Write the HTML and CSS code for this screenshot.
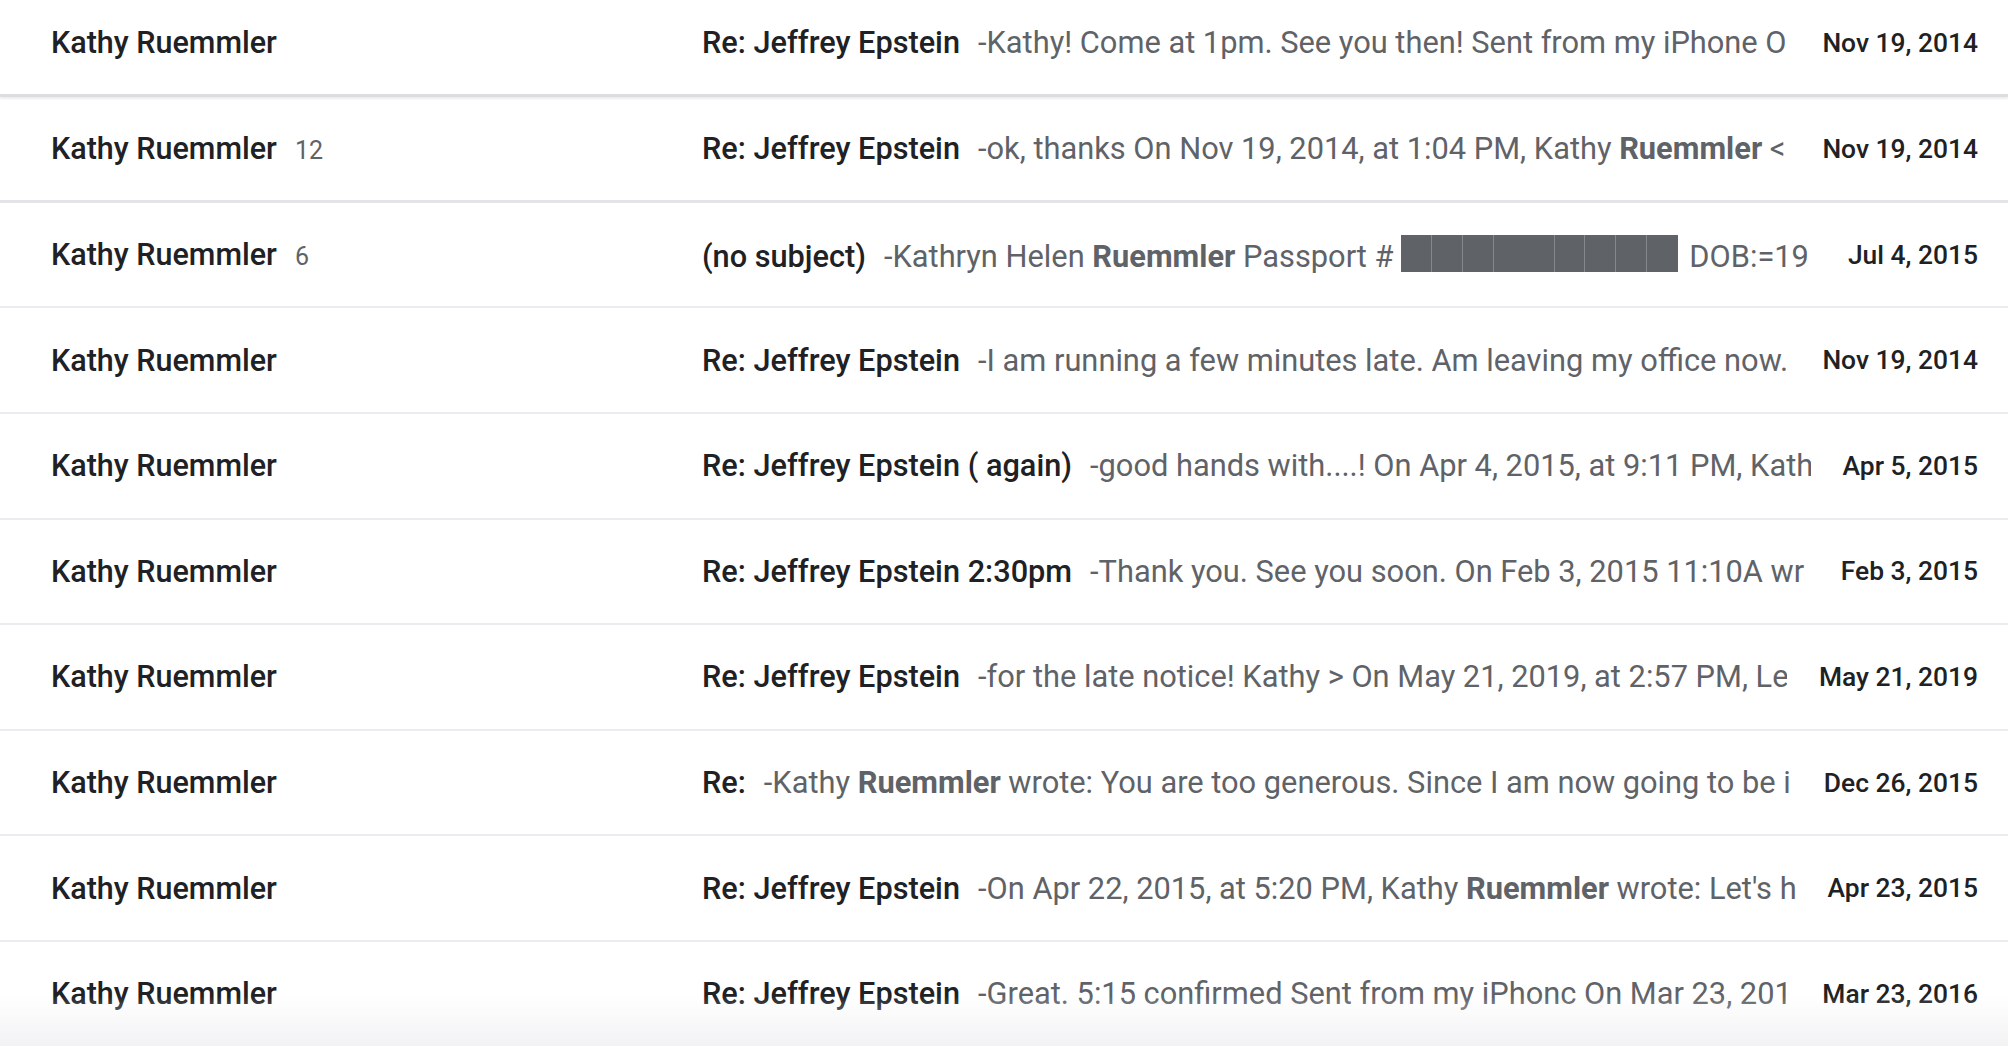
FILE: index.html
```html
<!DOCTYPE html>
<html lang="en">
<head>
<meta charset="utf-8">
<title>Inbox</title>
<link rel="stylesheet" href="styles.css">
</head>
<body>
<div class="viewport">
  <div class="list">
    <div class="row row-hover">
      <div class="from"><span class="name">Kathy Ruemmler</span></div>
      <div class="content"><span class="subject">Re: Jeffrey Epstein</span><span class="snippet">-Kathy! Come at 1pm. See you then! Sent from my iPhone O</span></div>
      <div class="date">Nov 19, 2014</div>
    </div>
    <div class="row row-hover2">
      <div class="from"><span class="name">Kathy Ruemmler</span><span class="count">12</span></div>
      <div class="content"><span class="subject">Re: Jeffrey Epstein</span><span class="snippet">-ok, thanks On Nov 19, 2014, at 1:04 PM, Kathy <b>Ruemmler</b> &lt;</span></div>
      <div class="date">Nov 19, 2014</div>
    </div>
    <div class="row">
      <div class="from"><span class="name">Kathy Ruemmler</span><span class="count">6</span></div>
      <div class="content"><span class="subject">(no subject)</span><span class="snippet">-Kathryn Helen <b>Ruemmler</b> Passport # <span class="redact"><i class="c1"></i><i class="c1"></i><i class="c1"></i><i class="c2"></i><i class="c1"></i><i class="c1"></i><i class="c1"></i><i class="c1 last"></i></span> DOB:=19</span></div>
      <div class="date">Jul 4, 2015</div>
    </div>
    <div class="row">
      <div class="from"><span class="name">Kathy Ruemmler</span></div>
      <div class="content"><span class="subject">Re: Jeffrey Epstein</span><span class="snippet">-I am running a few minutes late. Am leaving my office now.</span></div>
      <div class="date">Nov 19, 2014</div>
    </div>
    <div class="row">
      <div class="from"><span class="name">Kathy Ruemmler</span></div>
      <div class="content"><span class="subject">Re: Jeffrey Epstein ( again)</span><span class="snippet">-good hands with....! On Apr 4, 2015, at 9:11 PM, Kath</span></div>
      <div class="date">Apr 5, 2015</div>
    </div>
    <div class="row">
      <div class="from"><span class="name">Kathy Ruemmler</span></div>
      <div class="content"><span class="subject">Re: Jeffrey Epstein 2:30pm</span><span class="snippet">-Thank you. See you soon. On Feb 3, 2015 11:10A wr</span></div>
      <div class="date">Feb 3, 2015</div>
    </div>
    <div class="row">
      <div class="from"><span class="name">Kathy Ruemmler</span></div>
      <div class="content"><span class="subject">Re: Jeffrey Epstein</span><span class="snippet">-for the late notice! Kathy &gt; On May 21, 2019, at 2:57 PM, Le</span></div>
      <div class="date">May 21, 2019</div>
    </div>
    <div class="row">
      <div class="from"><span class="name">Kathy Ruemmler</span></div>
      <div class="content"><span class="subject">Re:</span><span class="snippet">-Kathy <b>Ruemmler</b> wrote: You are too generous. Since I am now going to be i</span></div>
      <div class="date">Dec 26, 2015</div>
    </div>
    <div class="row">
      <div class="from"><span class="name">Kathy Ruemmler</span></div>
      <div class="content"><span class="subject">Re: Jeffrey Epstein</span><span class="snippet">-On Apr 22, 2015, at 5:20 PM, Kathy <b>Ruemmler</b> wrote: Let's h</span></div>
      <div class="date">Apr 23, 2015</div>
    </div>
    <div class="row">
      <div class="from"><span class="name">Kathy Ruemmler</span></div>
      <div class="content"><span class="subject">Re: Jeffrey Epstein</span><span class="snippet">-Great. 5:15 confirmed Sent from my iPhonc On Mar 23, 201</span></div>
      <div class="date">Mar 23, 2016</div>
    </div>
  </div>
  <div class="fade"></div>
</div>
</body>
</html>
```

FILE: styles.css
```css
html, body {
  margin: 0;
  padding: 0;
  background: #ffffff;
}

body {
  font-family: Roboto, "Liberation Sans", Arial, sans-serif;
  color: #202124;
  overflow: hidden;
}

.viewport {
  position: relative;
  width: 2008px;
  height: 1046px;
  overflow: hidden;
}

.list {
  margin-top: -8.4px;
  display: flex;
  flex-direction: column;
}

.row {
  box-sizing: border-box;
  height: 105.6px;
  display: flex;
  align-items: center;
  padding: 0 30px 0 51px;
  border-bottom: 2px solid #ececf0;
  white-space: nowrap;
}

.row-hover {
  border-bottom: 3px solid #dcdde0;
  box-shadow: 0 2px 2px rgba(60, 64, 67, 0.10);
  position: relative;
  z-index: 2;
}

.row-hover2 {
  border-bottom: 3px solid #e3e4e7;
  position: relative;
  z-index: 1;
}

.from {
  width: 651px;
  flex: none;
  display: flex;
  align-items: baseline;
}

.name {
  font-size: 30.5px;
  font-weight: 500;
  color: #202124;
}

.count {
  font-size: 25px;
  font-weight: 400;
  color: #5f6368;
  margin-left: 18px;
}

.content {
  flex: 1;
  min-width: 0;
  overflow: hidden;
  display: flex;
  align-items: baseline;
}

.subject {
  flex: none;
  font-size: 30.7px;
  font-weight: 500;
  color: #202124;
}

.snippet {
  font-size: 30.8px;
  font-weight: 400;
  color: #5f6368;
  margin-left: 18px;
  white-space: nowrap;
}

.snippet b {
  font-weight: 700;
  color: #5f6368;
}

.redact {
  display: inline-flex;
  vertical-align: -5px;
  height: 37px;
  background: #5f6368;
  margin: 0 4px 0 0;
}

.redact i {
  display: block;
  height: 37px;
  box-sizing: border-box;
  border-right: 1px solid #85888d;
}

.redact .c1 { width: 30.8px; }
.redact .c2 { width: 61px; }
.redact .last { border-right: none; }

.date {
  flex: none;
  margin-left: 32px;
  font-size: 26.4px;
  font-weight: 500;
  color: #202124;
  text-align: right;
}

.fade {
  position: absolute;
  left: 0;
  right: 0;
  bottom: 0;
  height: 50px;
  background: linear-gradient(to bottom, rgba(240, 240, 242, 0), rgba(240, 240, 242, 0.85));
  pointer-events: none;
}
```
